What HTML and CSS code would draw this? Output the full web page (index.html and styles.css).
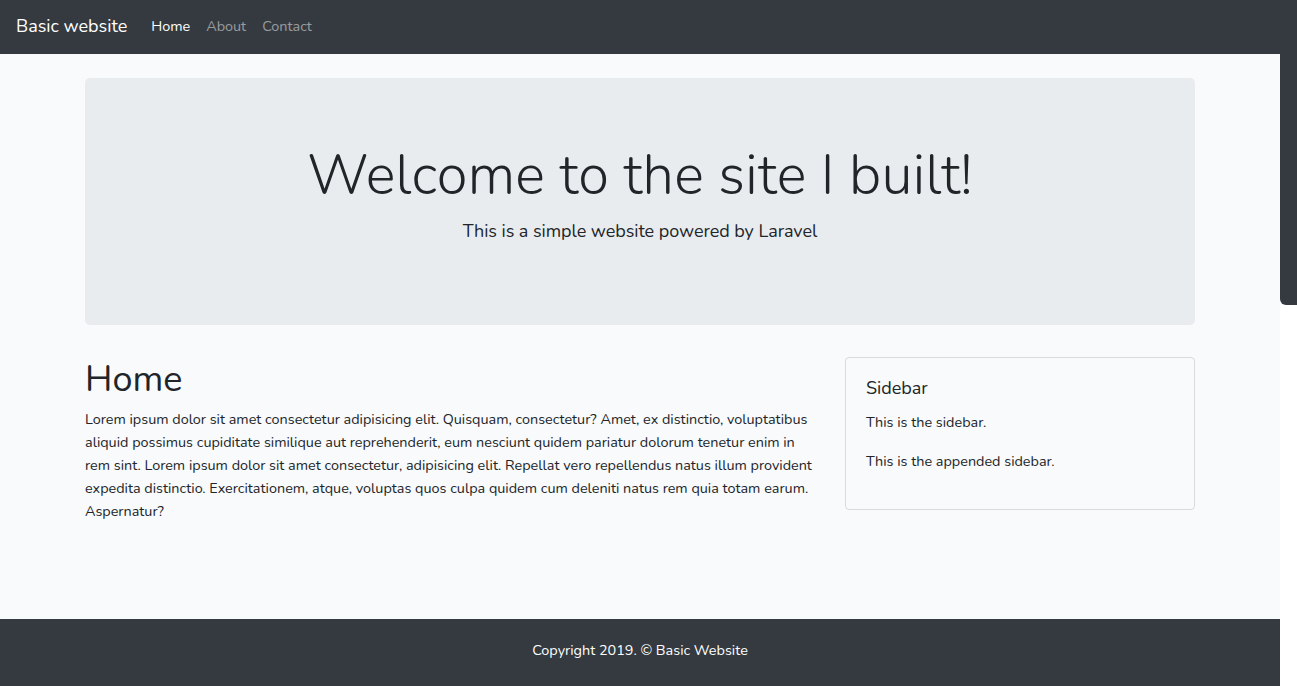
FILE: index.html
```html
<!DOCTYPE html>
<html lang="en">
<head>
<meta charset="utf-8">
<title>Basic website</title>
<link rel="stylesheet" href="styles.css">
</head>
<body>
<div class="frame">
  <div class="page">
    <nav class="navbar">
      <a class="brand" href="#">Basic website</a>
      <ul class="nav">
        <li><a class="nav-link active" href="#">Home</a></li>
        <li><a class="nav-link" href="#">About</a></li>
        <li><a class="nav-link" href="#">Contact</a></li>
      </ul>
    </nav>
    <main class="main">
      <div class="container">
        <section class="jumbotron">
          <h1 class="display">Welcome to the site I built!</h1>
          <p class="lead">This is a simple website powered by Laravel</p>
        </section>
        <div class="row">
          <div class="col-main">
            <h1 class="page-title">Home</h1>
            <p>Lorem ipsum dolor sit amet consectetur adipisicing elit. Quisquam, consectetur? Amet, ex distinctio, voluptatibus aliquid possimus cupiditate similique aut reprehenderit, eum nesciunt quidem pariatur dolorum tenetur enim in rem sint. Lorem ipsum dolor sit amet consectetur, adipisicing elit. Repellat vero repellendus natus illum provident expedita distinctio. Exercitationem, atque, voluptas quos culpa quidem cum deleniti natus rem quia totam earum. Aspernatur?</p>
          </div>
          <aside class="col-side">
            <div class="card">
              <h5 class="card-title">Sidebar</h5>
              <p>This is the sidebar.</p>
              <p>This is the appended sidebar.</p>
            </div>
          </aside>
        </div>
      </div>
    </main>
    <footer class="footer">
      <p>Copyright 2019. &copy; Basic Website</p>
    </footer>
  </div>
  <div class="scrollbar"><div class="thumb"></div></div>
</div>
</body>
</html>
```
FILE: styles.css
```css
* { box-sizing: border-box; }
html, body { margin: 0; padding: 0; }
body {
  font-family: "Nunito", Lato, "Noto Sans", sans-serif;
  font-size: 14.4px;
  line-height: 1.6;
  color: #212529;
  background: #fff;
}
.frame {
  display: flex;
  height: 686px;
  overflow: hidden;
}
.page {
  flex: 1;
  display: flex;
  flex-direction: column;
  min-width: 0;
}
.scrollbar {
  width: 17px;
  background: #fff;
}
.thumb {
  height: 305px;
  background: #343a40;
  border-radius: 0 0 0 6px;
}
.navbar {
  height: 54px;
  flex: none;
  background: #343a40;
  display: flex;
  align-items: center;
  padding: 0 16px;
}
.brand {
  color: #fff;
  text-decoration: none;
  font-size: 18px;
  margin-right: 16px;
  line-height: 1;
  padding-bottom: 2px;
}
.nav {
  display: flex;
  list-style: none;
  margin: 0;
  padding: 0;
}
.nav-link {
  display: block;
  padding: 8px 8px;
  color: rgba(255,255,255,.5);
  text-decoration: none;
  font-size: 14.4px;
}
.nav-link.active { color: #fff; }
.main {
  flex: 1;
  background: #f8fafc;
  padding-top: 24px;
}
.container {
  width: 1110px;
  margin: 0 auto;
}
.jumbotron {
  background: #e9ecef;
  border-radius: 4.8px;
  padding: 64px 32px 63px;
  margin-bottom: 32px;
  text-align: center;
}
.display {
  font-size: 56px;
  font-weight: 300;
  letter-spacing: 0.24px;
  line-height: 1.2;
  margin: 0 0 8px;
}
.lead {
  font-size: 18px;
  font-weight: 400;
  letter-spacing: -0.05px;
  margin: 0 0 16px;
}
.row {
  display: flex;
  gap: 30px;
}
.col-main { width: 730px; }
.col-side { width: 350px; }
.page-title {
  font-size: 36px;
  font-weight: 400;
  line-height: 1.2;
  margin: 1px 0 7px;
}
p { margin: 0 0 16px; }
.card {
  border: 1px solid rgba(0,0,0,.125);
  border-radius: 4px;
  padding: 20px 20px 4px;
  margin-bottom: 0;
}
.card p:last-child { margin-bottom: 32px; }
.card-title {
  font-size: 18px;
  font-weight: 400;
  line-height: 1.2;
  margin: 0 0 11px;
}
.footer {
  flex: none;
  height: 67px;
  background: #343a40;
  color: #fff;
  text-align: center;
  padding-top: 20px;
}
.footer p { margin: 0; }
```
